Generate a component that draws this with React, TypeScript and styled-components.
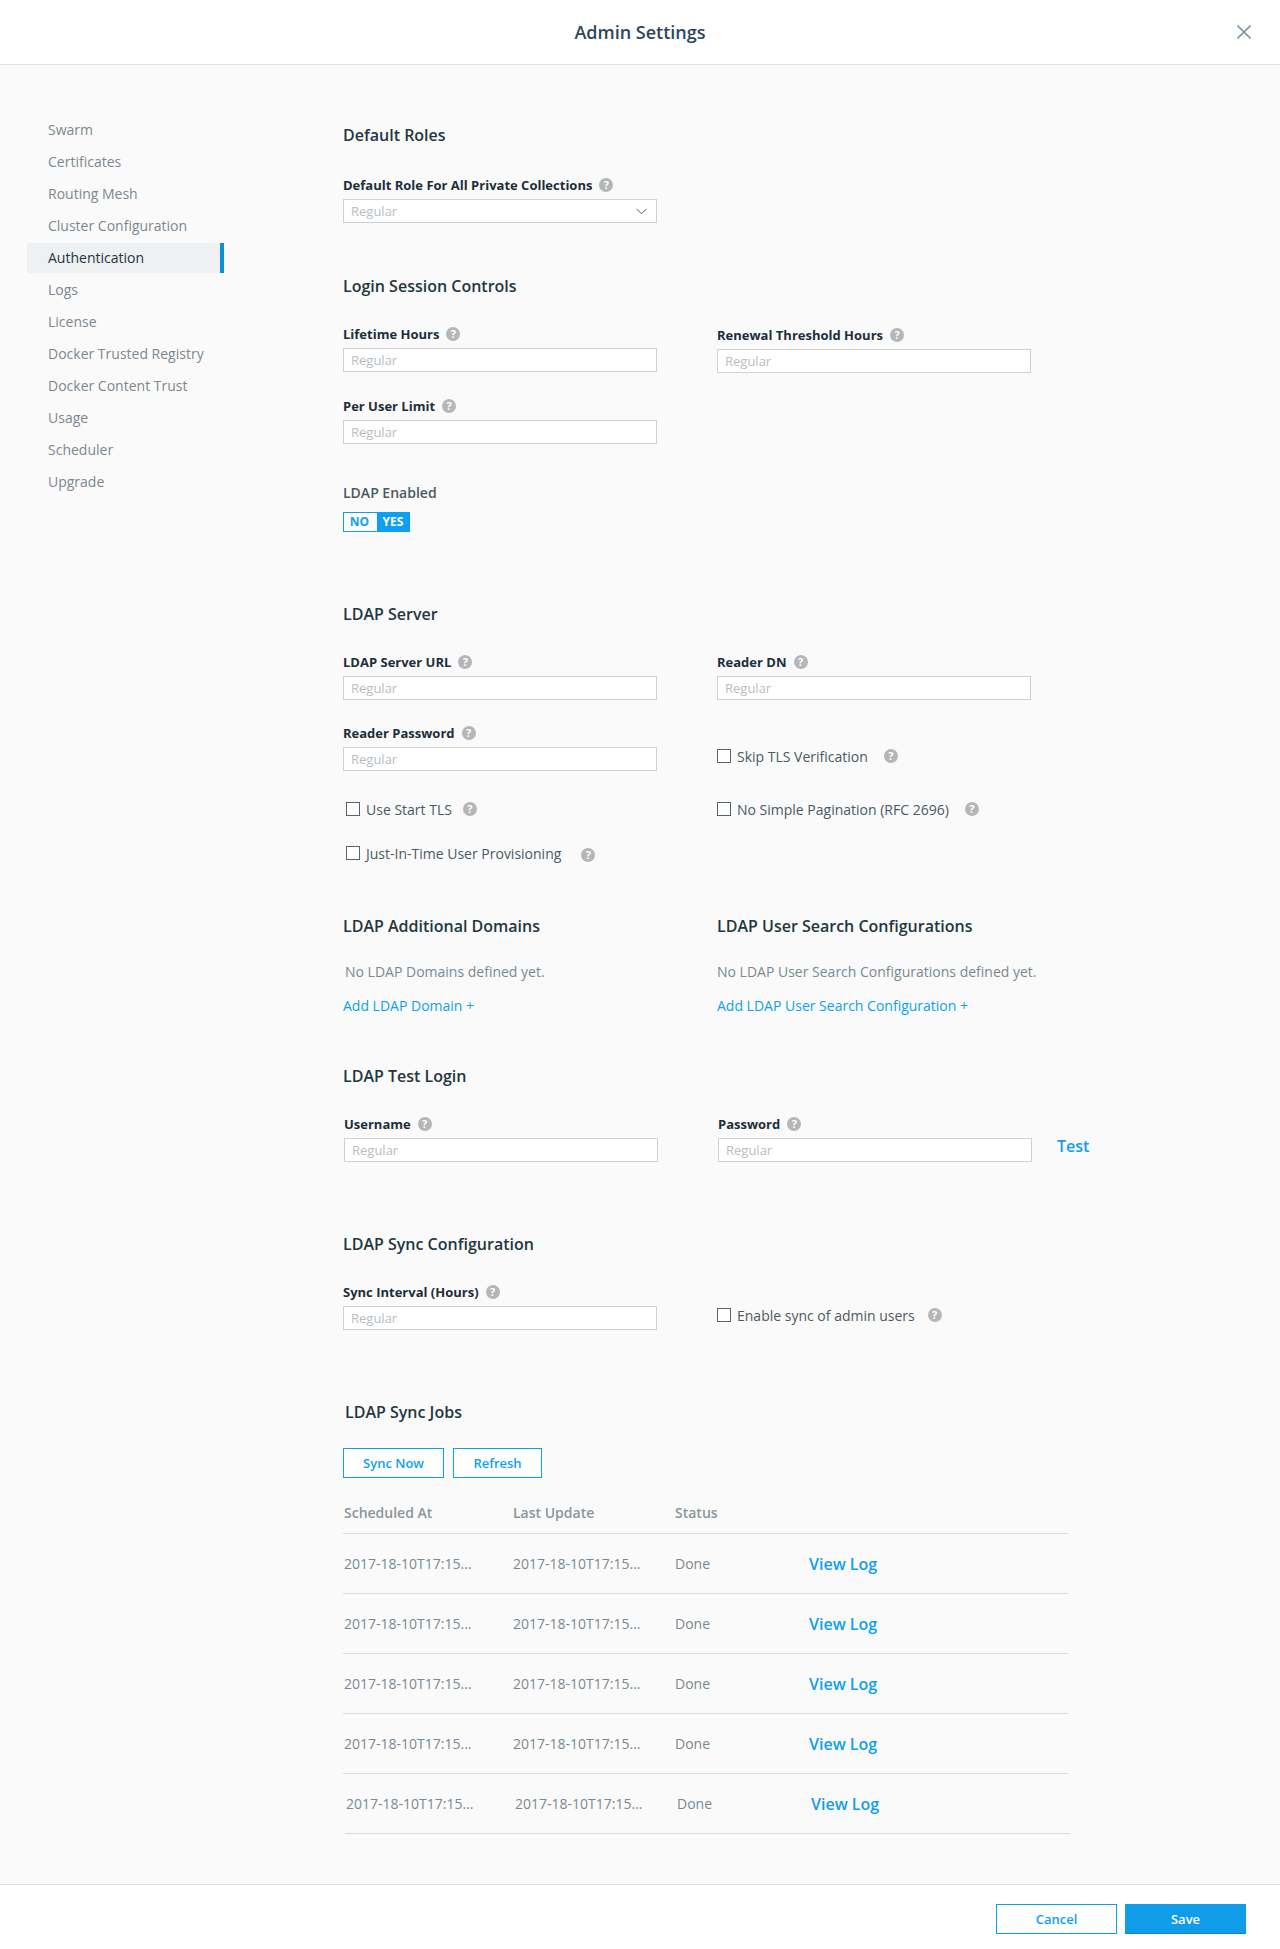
import React from "react";
import styled, { createGlobalStyle } from "styled-components";

const SIDE_ITEMS = [
  "Swarm",
  "Certificates",
  "Routing Mesh",
  "Cluster Configuration",
  "Authentication",
  "Logs",
  "License",
  "Docker Trusted Registry",
  "Docker Content Trust",
  "Usage",
  "Scheduler",
  "Upgrade",
];

const STAMP = "2017-18-10T17:15...";

const App = () => {
  return (
    <Page>
      <GlobalStyle />
      <Header>
        <Title>Admin Settings</Title>
        <CloseButton aria-label="Close">
          <svg width="14" height="14" viewBox="0 0 14 14">
            <path d="M0.5 0.5 L13.5 13.5 M13.5 0.5 L0.5 13.5" stroke="#7f949e" strokeWidth="1.6" fill="none" />
          </svg>
        </CloseButton>
      </Header>

      <Body>
        <Sidebar>
          {SIDE_ITEMS.map((item) => (
            <SideItem key={item} $active={item === "Authentication"}>
              {item}
            </SideItem>
          ))}
        </Sidebar>

        <Main>
          <Heading>Default Roles</Heading>
          <Row $top={30}>
            <Field>
              <FieldLabel label="Default Role For All Private Collections" />
              <SelectBox>
                <span>Regular</span>
                <svg width="11" height="7" viewBox="0 0 11 7">
                  <path d="M0.5 0.8 L5.5 5.8 L10.5 0.8" stroke="#4d5b64" strokeWidth="1" fill="none" />
                </svg>
              </SelectBox>
            </Field>
          </Row>

          <Heading $top={52}>Login Session Controls</Heading>
          <Row $top={28}>
            <Field>
              <FieldLabel label="Lifetime Hours" />
              <TextInput placeholder="Regular" />
            </Field>
            <Field $shift={1}>
              <FieldLabel label="Renewal Threshold Hours" />
              <TextInput placeholder="Regular" />
            </Field>
          </Row>
          <Row $top={24}>
            <Field>
              <FieldLabel label="Per User Limit" />
              <TextInput placeholder="Regular" />
            </Field>
          </Row>

          <PlainLabel>LDAP Enabled</PlainLabel>
          <Toggle>
            <ToggleSide>NO</ToggleSide>
            <ToggleSide $on>YES</ToggleSide>
          </Toggle>

          <Heading $top={71}>LDAP Server</Heading>
          <Row $top={28}>
            <Field>
              <FieldLabel label="LDAP Server URL" />
              <TextInput placeholder="Regular" />
            </Field>
            <Field>
              <FieldLabel label="Reader DN" />
              <TextInput placeholder="Regular" />
            </Field>
          </Row>
          <Row $top={24} $end>
            <Field>
              <FieldLabel label="Reader Password" />
              <TextInput placeholder="Regular" />
            </Field>
            <CheckRow $bottom={5} $gap={16}>
              <CheckBox type="checkbox" />
              <span>Skip TLS Verification</span>
              <Help>?</Help>
            </CheckRow>
          </Row>
          <Row $top={28}>
            <CheckRow $indent={3} $gap={11}>
              <CheckBox type="checkbox" />
              <span>Use Start TLS</span>
              <Help>?</Help>
            </CheckRow>
            <CheckRow $gap={16}>
              <CheckBox type="checkbox" />
              <span>No Simple Pagination (RFC 2696)</span>
              <Help>?</Help>
            </CheckRow>
          </Row>
          <Row $top={24}>
            <CheckRow $indent={3} $gap={20}>
              <CheckBox type="checkbox" />
              <span>Just-In-Time User Provisioning</span>
              <Help $drop={2}>?</Help>
            </CheckRow>
          </Row>

          <Row $top={52}>
            <Heading>LDAP Additional Domains</Heading>
            <Heading>LDAP User Search Configurations</Heading>
          </Row>
          <Row $top={25}>
            <Note $indent={2}>No LDAP Domains defined yet.</Note>
            <Note>No LDAP User Search Configurations defined yet.</Note>
          </Row>
          <Row $top={14}>
            <AddLink>Add LDAP Domain +</AddLink>
            <AddLink>Add LDAP User Search Configuration +</AddLink>
          </Row>

          <Heading $top={49}>LDAP Test Login</Heading>
          <Row $top={28} $shift={1}>
            <Field>
              <FieldLabel label="Username" />
              <TextInput placeholder="Regular" />
            </Field>
            <TestField>
              <Field>
                <FieldLabel label="Password" />
                <TextInput placeholder="Regular" />
              </Field>
              <TestLink>Test</TestLink>
            </TestField>
          </Row>

          <Heading $top={71}>LDAP Sync Configuration</Heading>
          <Row $top={28} $end>
            <Field>
              <FieldLabel label="Sync Interval (Hours)" />
              <TextInput placeholder="Regular" />
            </Field>
            <CheckRow $bottom={5} $gap={13}>
              <CheckBox type="checkbox" />
              <span>Enable sync of admin users</span>
              <Help>?</Help>
            </CheckRow>
          </Row>

          <Heading $top={71} $shift={2}>
            LDAP Sync Jobs
          </Heading>
          <ButtonRow>
            <OutlineButton $width={101}>Sync Now</OutlineButton>
            <OutlineButton $width={89}>Refresh</OutlineButton>
          </ButtonRow>

          <JobTable>
            <JobHead>
              <span>Scheduled At</span>
              <span>Last Update</span>
              <span>Status</span>
            </JobHead>
            {[0, 0, 0, 0, 2].map((shift, i) => (
              <JobRow key={i} $shift={shift}>
                <span>{STAMP}</span>
                <span>{STAMP}</span>
                <span>Done</span>
                <ViewLog>View Log</ViewLog>
              </JobRow>
            ))}
          </JobTable>
        </Main>
      </Body>

      <Footer>
        <OutlineButton $width={121}>Cancel</OutlineButton>
        <SaveButton>Save</SaveButton>
      </Footer>
    </Page>
  );
};

const FieldLabel = ({ label }: { label: string }) => (
  <LabelRow>
    <span>{label}</span>
    <Help>?</Help>
  </LabelRow>
);

export default App;

const GlobalStyle = createGlobalStyle`
  html, body {
    margin: 0;
    padding: 0;
    background: #fafafa;
  }
  body, input, button {
    font-family: "Open Sans", "Liberation Sans", sans-serif;
  }
`;

const Page = styled.div`
  min-height: 100vh;
  display: flex;
  flex-direction: column;
  background: #fafafa;
`;

const Header = styled.header`
  position: relative;
  height: 64px;
  box-sizing: content-box;
  background: #fff;
  border-bottom: 1px solid #dfe2e5;
  display: flex;
  align-items: center;
  justify-content: center;
`;

const Title = styled.h1`
  margin: 0;
  font-size: 18px;
  font-weight: 600;
  color: #2b475b;
`;

const CloseButton = styled.button`
  position: absolute;
  right: 29px;
  top: 25px;
  width: 14px;
  height: 14px;
  padding: 0;
  border: 0;
  background: none;
  display: flex;
`;

const Body = styled.div`
  flex: 1;
  display: grid;
  grid-template-columns: 197px 1fr;
  column-gap: 119px;
  padding-left: 27px;
`;

const Sidebar = styled.nav`
  padding-top: 50px;
  display: flex;
  flex-direction: column;
  gap: 2px;
`;

const SideItem = styled.div<{ $active?: boolean }>`
  height: 30px;
  line-height: 30px;
  padding-left: 21px;
  font-size: 14px;
  color: ${(p) => (p.$active ? "#25363f" : "#7b8891")};
  background: ${(p) => (p.$active ? "#eff0f2" : "transparent")};
  border-right: 4px solid ${(p) => (p.$active ? "#0d8fd9" : "transparent")};
`;

const Main = styled.main`
  padding-top: 59px;
`;

const Heading = styled.h2<{ $top?: number; $shift?: number }>`
  margin: ${(p) => p.$top ?? 0}px 0 0 ${(p) => p.$shift ?? 0}px;
  font-size: 16px;
  line-height: 22px;
  font-weight: 600;
  color: #24363f;
`;

const Row = styled.div<{ $top?: number; $end?: boolean; $shift?: number }>`
  margin-top: ${(p) => p.$top ?? 0}px;
  margin-left: ${(p) => p.$shift ?? 0}px;
  display: grid;
  grid-template-columns: 314px 1fr;
  column-gap: 60px;
  align-items: ${(p) => (p.$end ? "end" : "start")};
`;

const Field = styled.div<{ $shift?: number }>`
  width: 314px;
  padding-top: ${(p) => p.$shift ?? 0}px;
`;

const LabelRow = styled.label`
  display: flex;
  align-items: center;
  gap: 7px;
  height: 18px;
  margin-bottom: 5px;
  font-size: 13px;
  font-weight: 700;
  color: #1c2e3a;
`;

const Help = styled.span<{ $drop?: number }>`
  flex: none;
  width: 14px;
  height: 14px;
  border-radius: 50%;
  background: #b4b6b8;
  color: #fff;
  font-size: 11px;
  font-weight: 700;
  line-height: 14px;
  text-align: center;
  position: relative;
  top: ${(p) => p.$drop ?? 0}px;
`;

const TextInput = styled.input`
  display: block;
  box-sizing: border-box;
  width: 314px;
  height: 24px;
  padding: 0 7px;
  border: 1px solid #cfd2d4;
  border-radius: 0;
  background: #fff;
  font-size: 13px;
  outline: none;

  &::placeholder {
    color: #b9bdc0;
    opacity: 1;
  }
`;

const SelectBox = styled.div`
  box-sizing: border-box;
  width: 314px;
  height: 24px;
  padding: 0 9px 0 7px;
  border: 1px solid #cfd2d4;
  background: #fff;
  font-size: 13px;
  color: #b9bdc0;
  display: flex;
  align-items: center;
  justify-content: space-between;
`;

const PlainLabel = styled.div`
  margin-top: 40px;
  font-size: 14px;
  font-weight: 600;
  line-height: 18px;
  color: #4a5963;
`;

const Toggle = styled.div`
  margin-top: 10px;
  width: 67px;
  height: 20px;
  box-sizing: border-box;
  border: 1px solid #0f9ff0;
  display: flex;
`;

const ToggleSide = styled.span<{ $on?: boolean }>`
  flex: ${(p) => (p.$on ? "0 0 32px" : "1")};
  padding-right: ${(p) => (p.$on ? 0 : 2)}px;
  text-align: center;
  font-size: 12px;
  font-weight: 700;
  line-height: 18px;
  color: ${(p) => (p.$on ? "#fff" : "#0f9ff0")};
  background: ${(p) => (p.$on ? "#0f9ff0" : "#fff")};
`;

const CheckRow = styled.div<{ $indent?: number; $gap?: number; $bottom?: number }>`
  height: 20px;
  display: flex;
  align-items: center;
  padding-left: ${(p) => p.$indent ?? 0}px;
  margin-bottom: ${(p) => p.$bottom ?? 0}px;
  font-size: 14px;
  color: #4a5963;

  ${Help} {
    margin-left: ${(p) => p.$gap ?? 12}px;
  }
`;

const CheckBox = styled.input`
  appearance: none;
  flex: none;
  box-sizing: border-box;
  width: 14px;
  height: 14px;
  margin: 0 6px 0 0;
  border: 1px solid #56646d;
  border-radius: 0;
  background: #fff;
`;

const Note = styled.div<{ $indent?: number }>`
  padding-left: ${(p) => p.$indent ?? 0}px;
  font-size: 14px;
  line-height: 20px;
  color: #7b8891;
  white-space: nowrap;
`;

const AddLink = styled.a`
  font-size: 14px;
  line-height: 20px;
  color: #0f9ff0;
`;

const TestField = styled.div`
  position: relative;
`;

const TestLink = styled.a`
  position: absolute;
  left: 339px;
  top: 20px;
  font-size: 16px;
  line-height: 22px;
  font-weight: 600;
  color: #0f9ff0;
`;

const ButtonRow = styled.div`
  margin-top: 25px;
  display: flex;
  gap: 9px;
`;

const OutlineButton = styled.button<{ $width: number }>`
  box-sizing: border-box;
  width: ${(p) => p.$width}px;
  height: 30px;
  padding: 0;
  border: 1px solid #0f9ff0;
  border-radius: 0;
  background: #fff;
  color: #0f9ff0;
  font-size: 13px;
  font-weight: 600;
`;

const SaveButton = styled.button`
  box-sizing: border-box;
  width: 121px;
  height: 30px;
  padding: 0;
  border: 0;
  border-bottom: 1px solid #0c86cc;
  background: #0f9de8;
  color: #fff;
  font-size: 13px;
  font-weight: 600;
`;

const JobTable = styled.div`
  margin-top: 25px;
  width: 725px;
  padding-bottom: 50px;
`;

const JobHead = styled.div`
  display: grid;
  grid-template-columns: 169px 162px 134px 1fr;
  height: 30px;
  line-height: 20px;
  padding-left: 1px;
  border-bottom: 1px solid #d8dadc;
  font-size: 14px;
  font-weight: 600;
  color: #8a959c;
`;

const JobRow = styled.div<{ $shift?: number }>`
  display: grid;
  grid-template-columns: 169px 162px 134px 1fr;
  align-items: center;
  height: 59px;
  padding-left: 1px;
  transform: translateX(${(p) => p.$shift ?? 0}px);
  border-bottom: 1px solid #d8dadc;
  font-size: 14px;
  color: #7b8891;
`;

const ViewLog = styled.a`
  font-size: 16px;
  font-weight: 600;
  color: #0f9ff0;
`;

const Footer = styled.footer`
  height: 64px;
  box-sizing: content-box;
  border-top: 1px solid #dfe2e5;
  background: #fff;
  display: flex;
  justify-content: flex-end;
  gap: 8px;
  padding: 0 34px;
  align-items: flex-start;

  button {
    margin-top: 19px;
  }
`;
